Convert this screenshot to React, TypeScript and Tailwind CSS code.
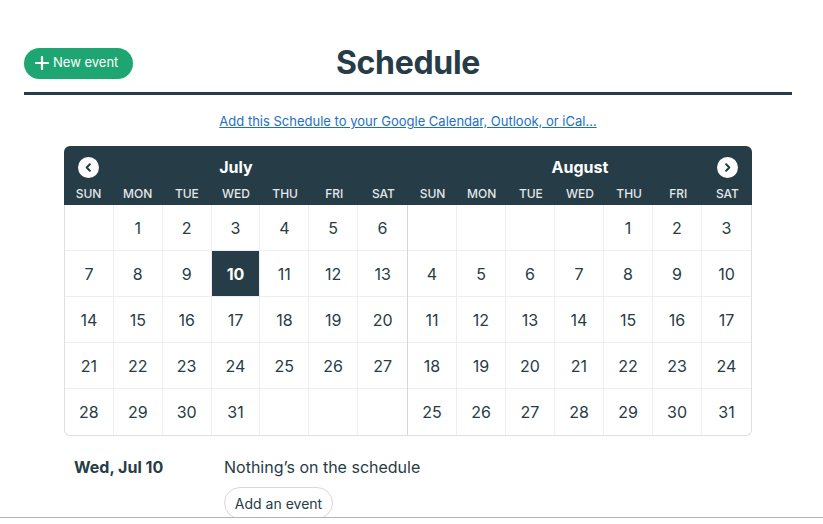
import React from "react";

const DAYS = ["SUN", "MON", "TUE", "WED", "THU", "FRI", "SAT"];

function monthCells(startDay: number, days: number) {
  const cells: (number | null)[] = [];
  for (let i = 0; i < startDay; i++) cells.push(null);
  for (let d = 1; d <= days; d++) cells.push(d);
  while (cells.length < 35) cells.push(null);
  return cells;
}

function MonthGrid({ cells, selected, divider }: { cells: (number | null)[]; selected?: number; divider?: boolean }) {
  return (
    <div className={`grid grid-cols-7 ${divider ? "border-r border-[#d3d8db]" : ""}`}>
      {cells.map((c, i) => {
        const col = i % 7;
        const row = Math.floor(i / 7);
        const isSel = c === selected;
        return (
          <div
            key={i}
            className={`h-[46px] flex items-center justify-center text-[16px] ${
              col < 6 ? "border-r border-[#eceef0]" : ""
            } ${row < 4 ? "border-b border-[#eceef0]" : ""} ${
              isSel ? "bg-[#263c46] text-white font-bold" : "text-[#263c46]"
            }`}
          >
            {c ?? ""}
          </div>
        );
      })}
    </div>
  );
}

function Chevron({ dir }: { dir: "left" | "right" }) {
  return (
    <div className="w-[21px] h-[21px] rounded-full bg-white flex items-center justify-center">
      <svg width="11" height="11" viewBox="0 0 12 12" fill="none">
        {dir === "left" ? (
          <path d="M7.5 2.5 L4 6 L7.5 9.5" stroke="#263c46" strokeWidth="2.2" strokeLinecap="round" strokeLinejoin="round" />
        ) : (
          <path d="M4.5 2.5 L8 6 L4.5 9.5" stroke="#263c46" strokeWidth="2.2" strokeLinecap="round" strokeLinejoin="round" />
        )}
      </svg>
    </div>
  );
}

export default function App() {
  const july = monthCells(1, 31);
  const aug = monthCells(4, 31);
  return (
    <div
      className="w-[823px] h-[518px] overflow-hidden border-b border-[#b4b4b4] bg-white"
      style={{ fontFamily: "Inter, 'Liberation Sans', sans-serif" }}
    >
      <div className="ml-[24px] w-[768px]">
        <div className="mt-[43px] h-[40px] grid grid-cols-[1fr_auto_1fr] items-center">
          <div>
            <button className="h-[31px] w-[109px] rounded-full bg-[#1ea672] text-white text-[13px] flex items-center pl-[11px] gap-[4px]">
              <svg width="14" height="14" viewBox="0 0 14 14">
                <path d="M7 1 V13 M1 7 H13" stroke="white" strokeWidth="2.2" strokeLinecap="round" />
              </svg>
              <span>New event</span>
            </button>
          </div>
          <h1 className="text-[32px] leading-[40px] font-bold text-[#263c46] tracking-[-0.3px]">Schedule</h1>
          <div />
        </div>
        <div className="mt-[9px] h-[3px] bg-[#263c46]" />
        <div className="mt-[17px] text-center text-[13px] leading-[18px]">
          <a className="text-[#1d6fc4] underline" href="#">
            Add this Schedule to your Google Calendar, Outlook, or iCal…
          </a>
        </div>
        <div className="mt-[16px] mx-[40px] w-[688px]">
          <div className="bg-[#263c46] rounded-t-md text-white">
            <div className="grid grid-cols-2 h-[36px] pt-[6px]">
              <div className="relative flex items-center justify-center">
                <div className="absolute left-[14px] top-[5px]">
                  <Chevron dir="left" />
                </div>
                <span className="text-[16px] font-bold">July</span>
              </div>
              <div className="relative flex items-center justify-center">
                <span className="text-[16px] font-bold">August</span>
                <div className="absolute right-[14px] top-[5px]">
                  <Chevron dir="right" />
                </div>
              </div>
            </div>
            <div className="grid grid-cols-14 h-[23px] items-center text-[12px] text-[#e3e8ea] font-medium">
              {[...DAYS, ...DAYS].map((d, i) => (
                <div key={i} className="text-center">
                  {d}
                </div>
              ))}
            </div>
          </div>
          <div className="grid grid-cols-2 border-l border-r border-b border-[#dde1e4] rounded-b-md overflow-hidden">
            <MonthGrid cells={july} selected={10} divider />
            <MonthGrid cells={aug} />
          </div>
        </div>
        <div className="mt-[20px] ml-[50px] flex">
          <div className="w-[150px] text-[16px] font-bold text-[#263c46] leading-[22px]">Wed, Jul 10</div>
          <div className="flex flex-col items-start">
            <div className="text-[16px] text-[#263c46] leading-[22px]">Nothing’s on the schedule</div>
            <button className="mt-[9px] h-[32px] w-[109px] rounded-full border border-[#d5d9dc] text-[14px] text-[#263c46]">
              Add an event
            </button>
          </div>
        </div>
      </div>
    </div>
  );
}
